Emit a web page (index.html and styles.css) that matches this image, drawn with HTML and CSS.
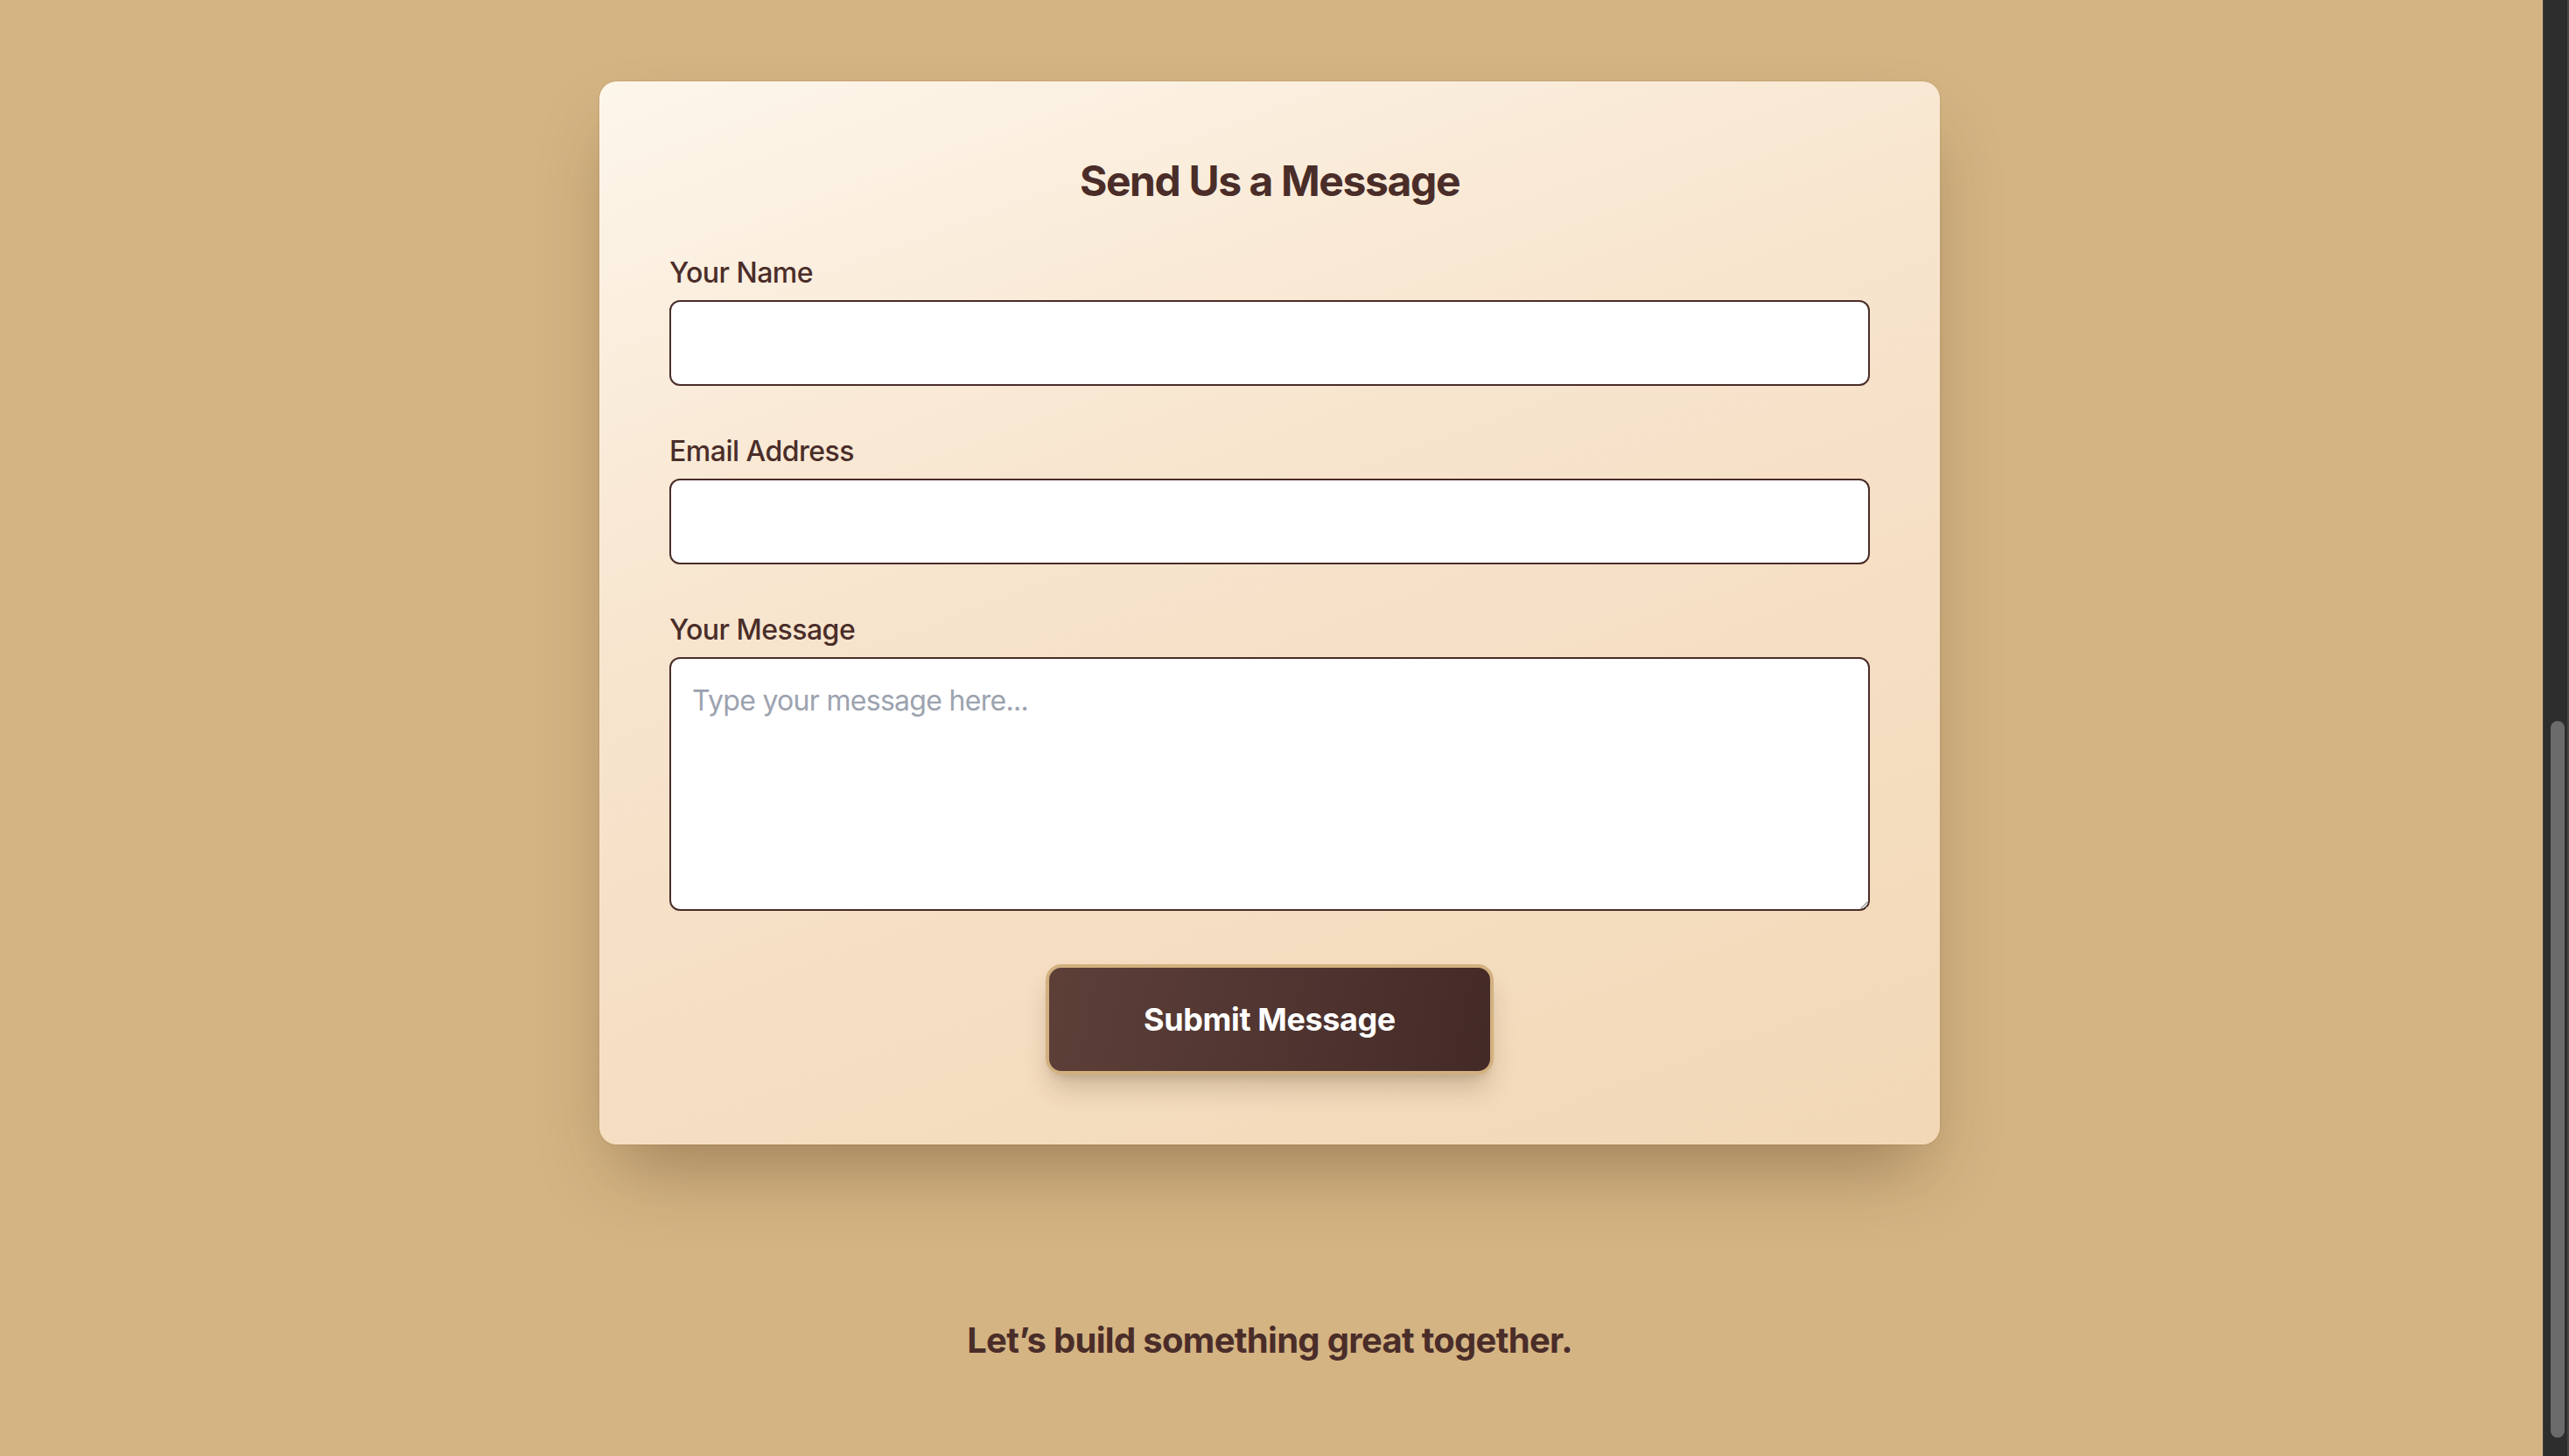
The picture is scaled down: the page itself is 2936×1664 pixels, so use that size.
FILE: index.html
```html
<!DOCTYPE html>
<html lang="en">
<head>
<meta charset="utf-8">
<title>Send Us a Message</title>
<link rel="stylesheet" href="styles.css">
</head>
<body>
<div class="viewport">
  <main class="page">
    <section class="card">
      <h2 class="title">Send Us a Message</h2>
      <form class="form">
        <div class="field">
          <label class="label" for="name">Your Name</label>
          <input class="input" id="name" type="text">
        </div>
        <div class="field">
          <label class="label" for="email">Email Address</label>
          <input class="input" id="email" type="email">
        </div>
        <div class="field field-last">
          <label class="label" for="msg">Your Message</label>
          <textarea class="input textarea" id="msg" placeholder="Type your message here..."></textarea>
        </div>
        <div class="actions">
          <button class="submit" type="button">Submit Message</button>
        </div>
      </form>
    </section>
    <p class="tagline">Let’s build something great together.</p>
  </main>
  <div class="scrollbar"><div class="thumb"></div></div>
</div>
</body>
</html>
```

FILE: styles.css
```css
* { box-sizing: border-box; }

html, body {
  margin: 0;
  padding: 0;
  height: 100%;
}

body {
  background: #d4b483;
  font-family: Inter, "Noto Sans", "Liberation Sans", sans-serif;
  color: #4a2d29;
  overflow: hidden;
}

.viewport {
  display: flex;
  height: 100vh;
}

.page {
  flex: 1;
  display: flex;
  flex-direction: column;
  align-items: center;
  padding: 93px 4px 0 0;
}

.card {
  width: 1532px;
  padding: 80px;
  border-radius: 20px;
  background: linear-gradient(160deg, #fdf6eb 0%, #f8e6d0 35%, #f5dec3 65%, #f2d8b6 100%);
  box-shadow: 0 44px 80px -22px rgba(60, 35, 10, 0.36), 0 0 2px rgba(120, 80, 30, 0.3);
}

.title {
  margin: 0 0 47px;
  text-align: center;
  font-size: 48px;
  line-height: 68px;
  font-weight: 700;
  letter-spacing: -1.4px;
  color: #4a2d29;
}

.form {
  display: flex;
  flex-direction: column;
  margin: 0;
}

.field {
  display: flex;
  flex-direction: column;
  margin-bottom: 51px;
}

.field-last {
  margin-bottom: 0;
}

.label {
  display: block;
  font-size: 32px;
  line-height: 48px;
  font-weight: 500;
  letter-spacing: -0.5px;
  margin-bottom: 7px;
  color: #4a2d29;
}

.input {
  display: block;
  width: 100%;
  height: 98px;
  margin: 0;
  padding: 0 24px;
  border: 2px solid #4a2d29;
  border-radius: 12px;
  background: #ffffff;
  font-family: Inter, "Noto Sans", sans-serif;
  font-size: 32px;
  color: #4a2d29;
  outline: none;
}

.textarea {
  height: 290px;
  padding: 24px;
  line-height: 48px;
  letter-spacing: -0.7px;
  resize: vertical;
}

.textarea::placeholder {
  color: #9ca3af;
}

.actions {
  display: flex;
  justify-content: center;
  margin-top: 61px;
}

.submit {
  padding: 32px 108px;
  border: 4px solid #d2b180;
  border-radius: 18px;
  background: linear-gradient(100deg, #5d3f38 0%, #4f3430 55%, #442a27 100%);
  color: #ffffff;
  font-family: Inter, "Noto Sans", sans-serif;
  font-size: 36px;
  line-height: 54px;
  font-weight: 700;
  letter-spacing: -0.4px;
  box-shadow: 0 20px 30px -6px rgba(60, 35, 10, 0.22), 0 8px 12px -8px rgba(60, 35, 10, 0.2);
  cursor: pointer;
}

.tagline {
  margin: 196px 0 0;
  font-size: 40px;
  line-height: 56px;
  font-weight: 700;
  letter-spacing: -0.7px;
  color: #4a2d29;
  text-align: center;
}

.scrollbar {
  width: 30px;
  flex: none;
  display: flex;
  flex-direction: column;
  justify-content: flex-end;
  align-items: flex-start;
  padding: 0 0 21px 8px;
  background: #2d2d2d;
  border-left: 1px solid #3c3c3c;
  border-right: 2px solid #474747;
}

.thumb {
  width: 16px;
  height: 819px;
  border-radius: 8px;
  background: #6b6b6b;
}
```
